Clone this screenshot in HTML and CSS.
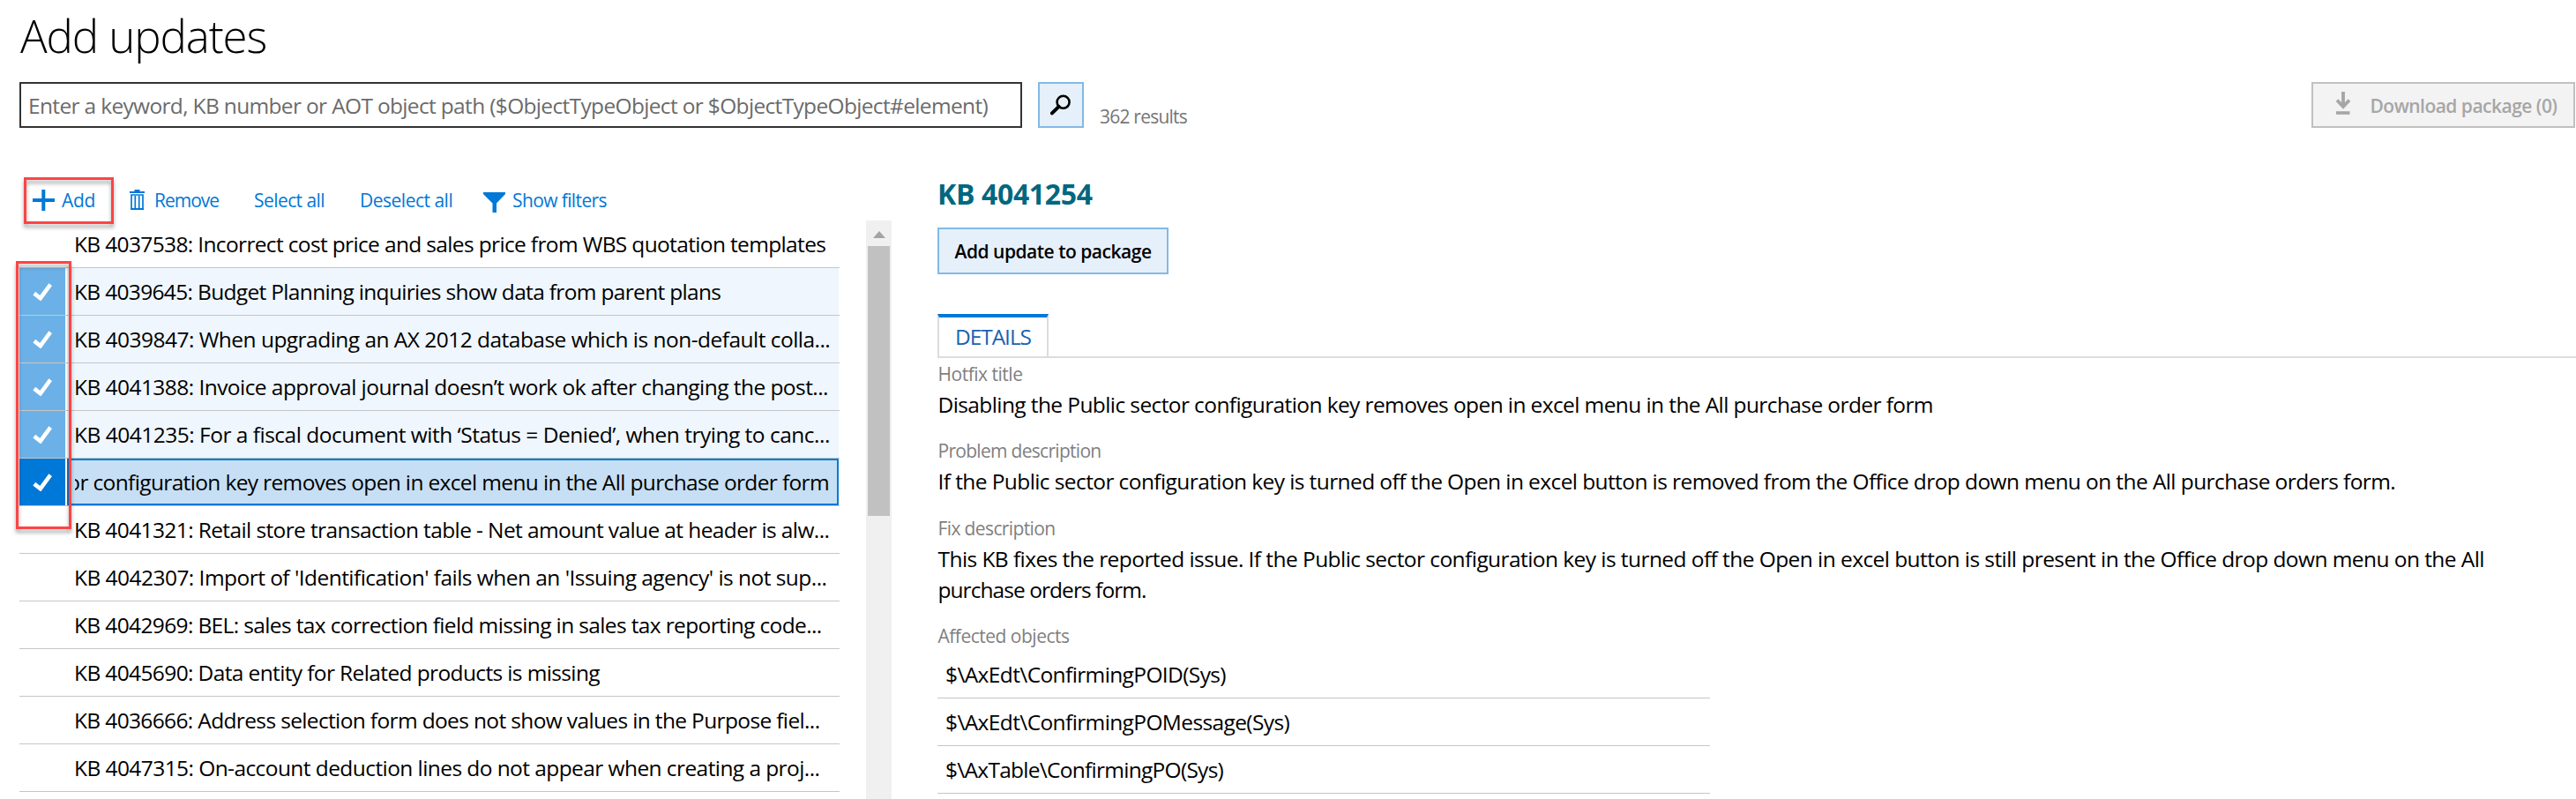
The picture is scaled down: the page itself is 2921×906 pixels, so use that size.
FILE: index.html
```
<!DOCTYPE html>
<html lang="en">
<head>
<meta charset="utf-8">
<title>Add updates</title>
<link rel="stylesheet" href="styles.css">
</head>
<body>
<svg class="defs" width="0" height="0"><defs>
  <symbol id="check" viewBox="0 0 22 20"><path d="M1.8 11.6 8.8 17.2 20.2 1.6" fill="none" stroke="#fff" stroke-width="4.6"/></symbol>
</defs></svg>
<main class="page">
  <h1 class="title">Add updates</h1>
  <div class="search-bar">
    <div class="search-input"><span>Enter a keyword, KB number or AOT object path ($ObjectTypeObject or $ObjectTypeObject#element)</span></div>
    <button class="search-button" aria-label="Search"><svg width="24" height="24" viewBox="0 0 24 24"><circle cx="14.6" cy="8.8" r="7" fill="none" stroke="#000" stroke-width="2.6"/><path d="M9.6 13.8 1.9 21.4" stroke="#000" stroke-width="4" stroke-linecap="round"/></svg></button>
    <span class="result-count">362 results</span>
    <button class="download"><svg width="16" height="27" viewBox="0 0 16 27"><path d="M8 0v17M1 9.500l7 7.500 7-7.500" fill="none" stroke="#a6a6a6" stroke-width="3.800"/><path d="M0 24h15.500" stroke="#a6a6a6" stroke-width="3.600"/></svg><span>Download package (0)</span></button>
  </div>
  <div class="panels">
    <section class="updates">
      <div class="toolbar">
        <a class="tool tool-add"><svg width="25" height="24" viewBox="0 0 25 24"><path d="M12.300 0v24M0 12h25" stroke="#0078d7" stroke-width="4"/></svg><span>Add</span></a>
        <a class="tool tool-remove"><svg width="17" height="24" viewBox="0 0 17 24"><path d="M5.500 1h6M0 3h17" stroke="#0078d7" stroke-width="2"/><path d="M2 6h13v16H2zM6.300 7v14M10.700 7v14" fill="none" stroke="#0078d7" stroke-width="1.700"/><path d="M1 22h15" stroke="#0078d7" stroke-width="2"/></svg><span>Remove</span></a>
        <a class="tool tool-select"><span>Select all</span></a>
        <a class="tool tool-deselect"><span>Deselect all</span></a>
        <a class="tool tool-filter"><svg width="25" height="23" viewBox="0 0 25 23"><path d="M0 0h25v2L15 12.500V23h-4.500V12.500L0 2z" fill="#0078d7"/></svg><span>Show filters</span></a>
      </div>
      <div class="list-area">
        <ul class="list">
          <li class="row"><div class="mark"></div><div class="cell"><span>KB 4037538: Incorrect cost price and sales price from WBS quotation templates</span></div></li>
          <li class="row checked"><div class="mark"><svg width="22" height="20"><use href="#check"/></svg></div><div class="cell"><span>KB 4039645: Budget Planning inquiries show data from parent plans</span></div></li>
          <li class="row checked"><div class="mark"><svg width="22" height="20"><use href="#check"/></svg></div><div class="cell"><span>KB 4039847: When upgrading an AX 2012 database which is non-default colla...</span></div></li>
          <li class="row checked"><div class="mark"><svg width="22" height="20"><use href="#check"/></svg></div><div class="cell"><span>KB 4041388: Invoice approval journal doesn’t work ok after changing the post...</span></div></li>
          <li class="row checked"><div class="mark"><svg width="22" height="20"><use href="#check"/></svg></div><div class="cell"><span>KB 4041235: For a fiscal document with ‘Status = Denied’, when trying to canc...</span></div></li>
          <li class="row checked active"><div class="mark"><svg width="22" height="20"><use href="#check"/></svg></div><div class="cell"><div class="scrolled"><span>or configuration key removes open in excel menu in the All purchase order form</span></div></div></li>
          <li class="row"><div class="mark"></div><div class="cell"><span>KB 4041321: Retail store transaction table - Net amount value at header is alw...</span></div></li>
          <li class="row"><div class="mark"></div><div class="cell"><span>KB 4042307: Import of 'Identification' fails when an 'Issuing agency' is not sup...</span></div></li>
          <li class="row"><div class="mark"></div><div class="cell"><span>KB 4042969: BEL: sales tax correction field missing in sales tax reporting code...</span></div></li>
          <li class="row"><div class="mark"></div><div class="cell"><span>KB 4045690: Data entity for Related products is missing</span></div></li>
          <li class="row"><div class="mark"></div><div class="cell"><span>KB 4036666: Address selection form does not show values in the Purpose fiel...</span></div></li>
          <li class="row"><div class="mark"></div><div class="cell"><span>KB 4047315: On-account deduction lines do not appear when creating a proj...</span></div></li>
        </ul>
        <div class="scrollbar"><svg width="14" height="8" viewBox="0 0 14 8"><path d="M7 0l7 8H0z" fill="#a3a3a3"/></svg><div class="thumb"></div></div>
        <div class="callout callout-checks"></div>
      </div>
    </section>
    <section class="details">
      <h2 class="kb">KB 4041254</h2>
      <button class="add-update"><span>Add update to package</span></button>
      <div class="tabs"><div class="tab"><span>DETAILS</span></div></div>
      <div class="field hotfix"><div class="label">Hotfix title</div><div class="value">Disabling the Public sector configuration key removes open in excel menu in the All purchase order form</div></div>
      <div class="field problem"><div class="label">Problem description</div><div class="value">If the Public sector configuration key is turned off the Open in excel button is removed from the Office drop down menu on the All purchase orders form.</div></div>
      <div class="field fix"><div class="label">Fix description</div><div class="value">This KB fixes the reported issue. If the Public sector configuration key is turned off the Open in excel button is still present in the Office drop down menu on the All <span class="last-line">purchase orders form.</span></div></div>
      <div class="field affected"><div class="label">Affected objects</div>
        <ul class="objects">
          <li><span>$\AxEdt\ConfirmingPOID(Sys)</span></li>
          <li><span>$\AxEdt\ConfirmingPOMessage(Sys)</span></li>
          <li><span>$\AxTable\ConfirmingPO(Sys)</span></li>
        </ul>
      </div>
    </section>
  </div>
</main>
</body>
</html>
```
FILE: styles.css
```
*, *::before, *::after { box-sizing: border-box; }
body {
  margin: 0;
  background: #fff;
  color: #000;
  font: 24.5px/35px "Open Sans", "Noto Sans", sans-serif;
  overflow: hidden;
}
.defs { display: block; }
h1, h2, ul { margin: 0; padding: 0; list-style: none; }
button { font: inherit; padding: 0; border-radius: 0; }
svg { flex: none; display: block; }
.page { width: 2921px; height: 906px; padding: 10px 0 0 22px; overflow: hidden; }

.title { padding-left: 1px; font-size: 51px; font-weight: 300; line-height: 60px; letter-spacing: -1.1px; }

/* Search bar */
.search-bar { display: flex; height: 52px; margin-top: 23px; padding-right: 1px; }
.search-input { width: 1137px; border: 2px solid #333; padding-left: 8px; line-height: 49px; color: #6b6b6b; letter-spacing: -0.661px; white-space: nowrap; }
.search-button { display: flex; align-items: center; justify-content: center; width: 52px; margin-left: 18px; border: 2px solid #83b9e6; background: #e6f0fa; }
.result-count { margin: 25px 0 0 18px; font-size: 21px; line-height: 28px; color: #767676; letter-spacing: -0.777px; }
.download { display: flex; width: 299px; margin-left: auto; border: 2px solid #c0c0c0; background: #f3f3f3; padding: 9px 0 0 26px; color: #a6a6a6; font-size: 21px; font-weight: 600; letter-spacing: -0.523px; }
.download span { margin-left: 22.5px; line-height: 32px; white-space: nowrap; }

.panels { display: flex; }

/* Update list */
.updates { width: 989px; flex: none; }
.toolbar { display: flex; padding: 62px 0 0 15px; height: 105px; color: #0078d7; font-size: 21px; line-height: 40px; white-space: nowrap; }
.tool { position: relative; display: flex; align-items: center; height: 40px; }
.tool-add { width: 110px; letter-spacing: -0.33px; }
.tool-add span { margin-left: 8px; }
.tool-add::after {
  content: "";
  position: absolute;
  left: -10px;
  top: -6px;
  width: 102px;
  height: 53px;
  border: 3px solid #fb4545;
  filter: drop-shadow(0 4px 2px rgba(0, 0, 0, .35));
}
.tool-remove { width: 141px; letter-spacing: -1.02px; }
.tool-remove span { margin-left: 11px; }
.tool-select { width: 120px; letter-spacing: -0.567px; }
.tool-deselect { width: 140px; letter-spacing: -0.5px; }
.tool-filter { letter-spacing: -0.608px; }
.tool-filter svg { margin-top: 4px; }
.tool-filter span { margin-left: 8px; }

.list-area { position: relative; display: flex; justify-content: space-between; height: 656px; }
.list { width: 930px; }
.row { display: flex; height: 54px; border-bottom: 1px solid #c6c6c6; }
.mark { display: flex; align-items: center; justify-content: center; width: 52px; flex: none; }
.checked .mark { background: #6bb1e8; }
.cell { width: 875px; margin-left: 2px; padding-left: 8px; line-height: 53px; white-space: nowrap; }
.checked .cell { background: #eff6fd; }
.active .mark { background: #0078d7; }
.active .cell { border: 2px solid #0078d7; background: #c7dff4; padding: 0 9px 0 7px; line-height: 49px; }
.scrolled { display: flex; justify-content: flex-end; overflow: hidden; }
.row:nth-child(1) span { letter-spacing: -0.648px; }
.row:nth-child(2) span { letter-spacing: -0.672px; }
.row:nth-child(3) span { letter-spacing: -0.527px; }
.row:nth-child(4) span { letter-spacing: -0.555px; }
.row:nth-child(5) span { letter-spacing: -0.501px; }
.row:nth-child(6) span { letter-spacing: -0.644px; }
.row:nth-child(7) span { letter-spacing: -0.612px; }
.row:nth-child(8) span { letter-spacing: -0.54px; }
.row:nth-child(9) span { letter-spacing: -0.637px; }
.row:nth-child(10) span { letter-spacing: -0.624px; }
.row:nth-child(11) span { letter-spacing: -0.644px; }
.row:nth-child(12) span { letter-spacing: -0.575px; }

.scrollbar { width: 29px; background: #f0f0f0; padding: 12px 2px 0; }
.scrollbar svg { margin: 0 auto; }
.thumb { height: 306px; margin-top: 9px; background: #c1c1c1; }

.callout-checks {
  position: absolute;
  left: -4px;
  top: 46px;
  width: 63px;
  height: 304px;
  border: 3px solid #fb4545;
  filter: drop-shadow(0 4px 2px rgba(0, 0, 0, .35));
}

/* Detail pane */
.details { flex: 1; margin-left: 52px; padding-top: 55px; }
.kb { color: #00677f; font-size: 32px; font-weight: 700; line-height: 40px; letter-spacing: -0.35px; }
.add-update { display: block; width: 262px; height: 53px; margin-top: 18px; border: 2px solid #83b9e6; background: #e6f0fa; color: #000; font-size: 21px; line-height: 51px; font-weight: 600; letter-spacing: -0.487px; white-space: nowrap; }
.tabs { display: flex; height: 50px; margin-top: 45px; border-bottom: 2px solid #dcdcdc; }
.tab { width: 126px; border: 2px solid #dcdcdc; border-top: 4px solid #0078d7; border-bottom: 0; padding-left: 18px; color: #1a62b0; line-height: 43px; letter-spacing: -1.065px; }
.field { margin-bottom: 21px; padding-left: 0.5px; }
.hotfix { margin-top: 4px; }
.problem { margin-bottom: 22px; }
.label { font-size: 21px; line-height: 28px; color: #7f7f7f; margin-bottom: 3px; }
.value { white-space: nowrap; }
.hotfix .label { letter-spacing: -0.482px; }
.hotfix .value { letter-spacing: -0.6px; }
.problem .label { letter-spacing: -0.707px; }
.problem .value { letter-spacing: -0.593px; }
.fix .label { letter-spacing: -0.622px; }
.fix .value { letter-spacing: -0.566px; }
.fix .last-line { display: block; letter-spacing: -0.946px; }
.affected .label { letter-spacing: -0.498px; }
.objects { width: 876px; margin-left: -0.5px; }
.objects li { height: 54px; border-bottom: 1px solid #c6c6c6; padding-left: 9px; line-height: 53px; }
.objects li:nth-child(1) { letter-spacing: -0.62px; }
.objects li:nth-child(2) { letter-spacing: -0.62px; }
.objects li:nth-child(3) { letter-spacing: -0.73px; }
```
